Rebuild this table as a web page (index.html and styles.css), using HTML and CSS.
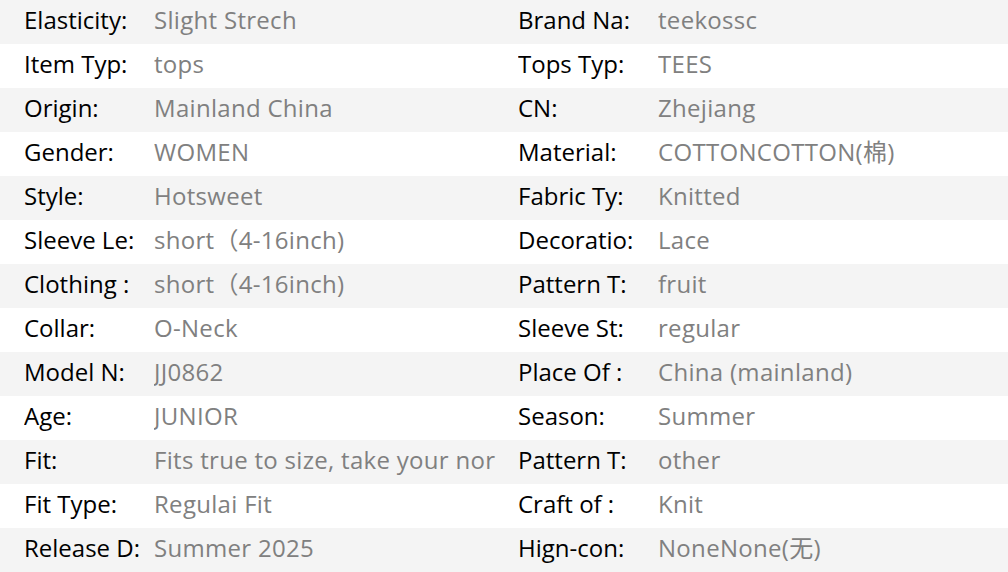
FILE: index.html
```html
<!DOCTYPE html>
<html>
<head>
<meta charset="utf-8">
<link rel="stylesheet" href="styles.css">
</head>
<body>
<div class="specs">
  <div class="row"><span class="k">Elasticity:</span><span class="v">Slight Strech</span><span class="k">Brand Na:</span><span class="v">teekossc</span></div>
  <div class="row"><span class="k">Item Typ:</span><span class="v">tops</span><span class="k">Tops Typ:</span><span class="v">TEES</span></div>
  <div class="row"><span class="k">Origin:</span><span class="v">Mainland China</span><span class="k">CN:</span><span class="v">Zhejiang</span></div>
  <div class="row"><span class="k">Gender:</span><span class="v">WOMEN</span><span class="k">Material:</span><span class="v">COTTONCOTTON(棉)</span></div>
  <div class="row"><span class="k">Style:</span><span class="v">Hotsweet</span><span class="k">Fabric Ty:</span><span class="v">Knitted</span></div>
  <div class="row"><span class="k">Sleeve Le:</span><span class="v">short（4-16inch)</span><span class="k">Decoratio:</span><span class="v">Lace</span></div>
  <div class="row"><span class="k">Clothing :</span><span class="v">short（4-16inch)</span><span class="k">Pattern T:</span><span class="v">fruit</span></div>
  <div class="row"><span class="k">Collar:</span><span class="v">O-Neck</span><span class="k">Sleeve St:</span><span class="v">regular</span></div>
  <div class="row"><span class="k">Model N:</span><span class="v">JJ0862</span><span class="k">Place Of :</span><span class="v">China (mainland)</span></div>
  <div class="row"><span class="k">Age:</span><span class="v">JUNIOR</span><span class="k">Season:</span><span class="v">Summer</span></div>
  <div class="row"><span class="k">Fit:</span><span class="v">Fits true to size, take your nor</span><span class="k">Pattern T:</span><span class="v">other</span></div>
  <div class="row"><span class="k">Fit Type:</span><span class="v">Regulai Fit</span><span class="k">Craft of :</span><span class="v">Knit</span></div>
  <div class="row"><span class="k">Release D:</span><span class="v">Summer 2025</span><span class="k">Hign-con:</span><span class="v">NoneNone(无)</span></div>
</div>
</body>
</html>
```
FILE: styles.css
```css
html, body {
  margin: 0;
  padding: 0;
  background: #fff;
}
.specs {
  width: 1008px;
  font-family: "Open Sans", "Noto Sans CJK SC", sans-serif;
  font-size: 24px;
}
.row {
  display: grid;
  grid-template-columns: 130px 364px 140px 1fr;
  padding-left: 24px;
  height: 44px;
  align-items: center;
  white-space: nowrap;
}
.row:nth-child(odd) {
  background: #f4f4f4;
}
.row span {
  overflow: hidden;
  line-height: 40px;
  padding-bottom: 4px;
}
.k {
  color: #000;
}
.v {
  color: #808080;
  letter-spacing: 0.3px;
}
```
